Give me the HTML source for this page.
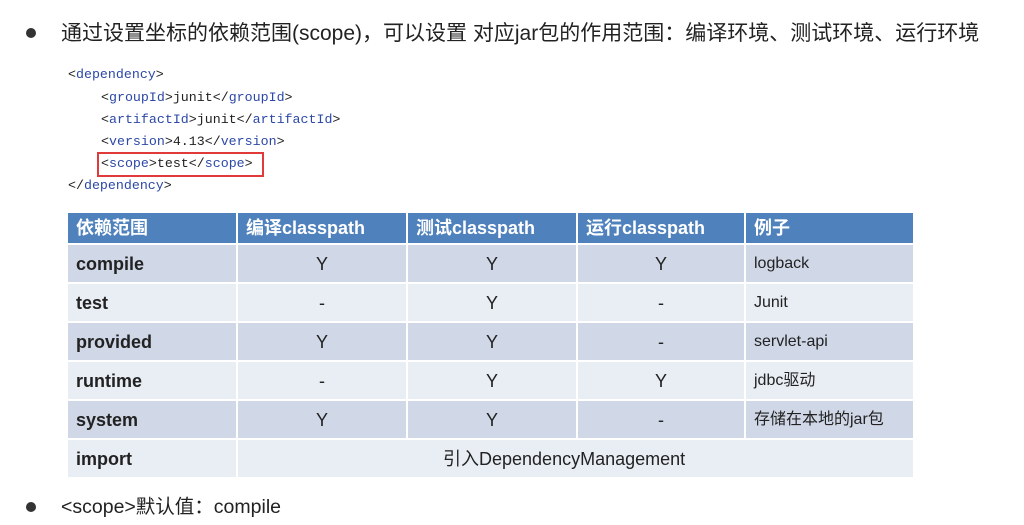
<!DOCTYPE html>
<html><head><meta charset="utf-8"><style>
body{margin:0;width:1024px;height:525px;background:#fff;position:relative;overflow:hidden;font-family:"Liberation Sans","Noto Sans CJK SC",sans-serif;color:#222}
.a{position:absolute;white-space:nowrap}
.dot{position:absolute;width:10px;height:10px;border-radius:50%;background:#333}
.code{font-family:"Liberation Mono","DejaVu Sans Mono",monospace;font-size:13.3px;color:#222;line-height:16px}
.t{color:#2c48a8}
table{position:absolute;left:66px;top:211px;border-collapse:collapse;width:849px;font-size:18px;table-layout:fixed}
td{border:2px solid #fff;padding:0 8px;height:37px;text-align:center;line-height:20px;overflow:hidden;white-space:nowrap}
td:first-child{text-align:left;font-weight:bold}
td:last-child{text-align:left;font-size:16px}
tr.h td{background:#4f81bd;color:#fff;font-weight:bold;text-align:left;font-size:18px;height:30px}
tr.d td{background:#d0d8e8}
tr.l td{background:#e9edf4}
</style></head><body>
<div class="dot" style="left:26px;top:28px"></div>
<div class="a" style="left:61px;top:21px;font-size:21px;line-height:26px">通过设置坐标的依赖范围(scope)，可以设置 对应jar包的作用范围：编译环境、测试环境、运行环境</div>
<div class="a code" style="left:68px;top:67px">&lt;<span class="t">dependency</span>&gt;</div>
<div class="a code" style="left:101px;top:90px">&lt;<span class="t">groupId</span>&gt;junit&lt;/<span class="t">groupId</span>&gt;</div>
<div class="a code" style="left:101px;top:112px">&lt;<span class="t">artifactId</span>&gt;junit&lt;/<span class="t">artifactId</span>&gt;</div>
<div class="a code" style="left:101px;top:134px">&lt;<span class="t">version</span>&gt;4.13&lt;/<span class="t">version</span>&gt;</div>
<div class="a code" style="left:101px;top:156px">&lt;<span class="t">scope</span>&gt;test&lt;/<span class="t">scope</span>&gt;</div>
<div class="a" style="left:97px;top:152px;width:163px;height:21px;border:2px solid #e03a3a"></div>
<div class="a code" style="left:68px;top:178px">&lt;/<span class="t">dependency</span>&gt;</div>
<table>
<colgroup><col style="width:170px"><col style="width:170px"><col style="width:170px"><col style="width:168px"><col></colgroup>
<tr class="h"><td>依赖范围</td><td>编译classpath</td><td>测试classpath</td><td>运行classpath</td><td>例子</td></tr>
<tr class="d"><td>compile</td><td>Y</td><td>Y</td><td>Y</td><td>logback</td></tr>
<tr class="l"><td>test</td><td>-</td><td>Y</td><td>-</td><td>Junit</td></tr>
<tr class="d"><td>provided</td><td>Y</td><td>Y</td><td>-</td><td>servlet-api</td></tr>
<tr class="l"><td>runtime</td><td>-</td><td>Y</td><td>Y</td><td>jdbc驱动</td></tr>
<tr class="d"><td>system</td><td>Y</td><td>Y</td><td>-</td><td>存储在本地的jar包</td></tr>
<tr class="l"><td>import</td><td colspan="4" style="text-align:left;padding-left:205px;font-weight:normal;font-size:18px">引入DependencyManagement</td></tr>
</table>
<div class="dot" style="left:26px;top:502px"></div>
<div class="a" style="left:61px;top:495px;font-size:19.5px;line-height:24px">&lt;scope&gt;默认值：compile</div>
</body></html>
